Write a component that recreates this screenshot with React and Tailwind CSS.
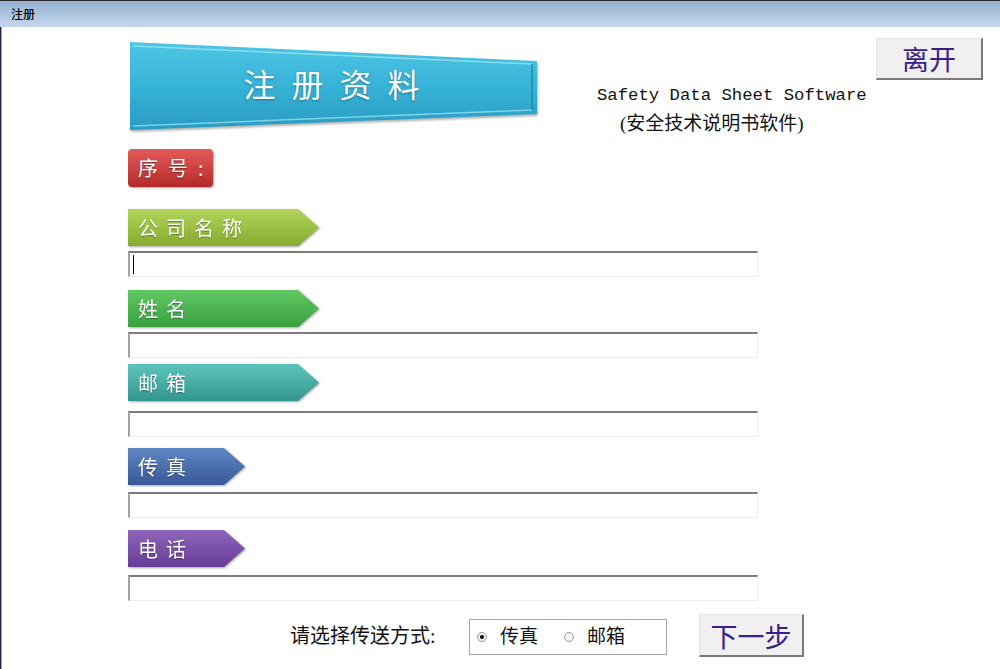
import React from 'react';

const fields = [
  { label: '公司名称', tagMt: 'mt-[22px]', inMt: 'mt-[5px]', wide: true, grad: 'from-[#b2d55a] to-[#85ab2c]', caret: true },
  { label: '姓名', tagMt: 'mt-[13px]', inMt: 'mt-[5px]', wide: true, grad: 'from-[#62c864] to-[#38a03e]' },
  { label: '邮箱', tagMt: 'mt-[6px]', inMt: 'mt-[10px]', wide: true, grad: 'from-[#5cc4bc] to-[#33978f]' },
  { label: '传真', tagMt: 'mt-[11px]', inMt: 'mt-[7px]', wide: false, grad: 'from-[#5f86c4] to-[#3a5996]' },
  { label: '电话', tagMt: 'mt-[12px]', inMt: 'mt-[8px]', wide: false, grad: 'from-[#9066bd] to-[#673b94]' },
];

const Banner = () => (
  <div className="relative ml-[2px] mt-[15px] w-[407px] h-[88px] flex items-center justify-center">
    {/* wordart style background */}
    <svg className="absolute inset-0 drop-shadow-[1px_2px_1px_rgba(0,0,0,0.3)]" width="407" height="88" viewBox="0 0 407 88">
      <defs>
        <linearGradient id="bn" x1="0" y1="0" x2="0" y2="1">
          <stop offset="0" stopColor="#4ec6e4" />
          <stop offset="0.5" stopColor="#37b3d8" />
          <stop offset="1" stopColor="#2a9bc2" />
        </linearGradient>
      </defs>
      <polygon points="0,0 407,19 407,72 0,88" fill="url(#bn)" />
      <polyline points="3,4 402,22" stroke="#9ae6f6" strokeWidth="1.5" fill="none" opacity="0.8" />
      <polyline points="3,84 402,68" stroke="#8fe0f2" strokeWidth="1.5" fill="none" opacity="0.8" />
      <polyline points="402,22 402,68" stroke="#2288ad" strokeWidth="1.5" fill="none" />
    </svg>
    <span className="relative mb-[6px] text-white text-[32px] leading-none tracking-[16px] pl-[12px] [text-shadow:0_1px_2px_rgba(0,60,90,0.5)] [font-family:'Noto_Sans_CJK_SC',sans-serif]">
      注册资料
    </span>
  </div>
);

const Tag = ({ label, wide, grad, mt }) => (
  <div className={`${mt} drop-shadow-[1px_1px_1px_rgba(0,0,0,0.35)]`}>
    <div
      className={`h-[37px] ${wide ? 'w-[191px]' : 'w-[117px]'} bg-linear-to-b ${grad} flex items-center pl-[10px] text-white text-[20px] tracking-[8px] whitespace-nowrap [text-shadow:0_1px_1px_rgba(0,0,0,0.35)] [clip-path:polygon(0_0,calc(100%_-_21px)_0,100%_50%,calc(100%_-_21px)_100%,0_100%)] [font-family:'Noto_Sans_CJK_SC',sans-serif]`}
    >
      {label}
    </div>
  </div>
);

const Field = ({ caret, mt }) => (
  <div className={`${mt} w-[630px] h-[26px] bg-white border-t-2 border-l-2 border-r border-b border-t-[#7c7c7c] border-l-[#a4a4a4] border-r-[#ececec] border-b-[#ececec] flex items-center`}>
    {caret && <span className="ml-[3px] w-px h-[19px] bg-black" />}
  </div>
);

const Radio = ({ checked }) => (
  <span className="w-[10px] h-[10px] rounded-full border border-[#9a9a9a] bg-[#f4f4f4] flex items-center justify-center">
    {checked && <span className="w-[4px] h-[4px] rounded-full bg-black" />}
  </span>
);

const WinButton = ({ children, className }) => (
  <button
    className={`${className} bg-[#f0f0f0] border-t border-l border-t-[#e4e4e4] border-l-[#e4e4e4] border-r-2 border-b-2 border-r-[#7a7a7a] border-b-[#7a7a7a] flex items-center justify-center text-[27px] leading-none text-[#38208c] [font-family:'Noto_Sans_CJK_SC',sans-serif]`}
  >
    {children}
  </button>
);

export default function App() {
  return (
    <div className="w-[1000px] h-[669px] flex flex-col bg-white overflow-hidden text-[#111] [font-family:'Liberation_Serif','Noto_Sans_CJK_SC',serif]">
      {/* title bar */}
      <div className="h-[27px] shrink-0 border-t border-[#2a2a2a] bg-linear-to-b from-[#97b1d2] to-[#c5d7ec] flex items-center pl-[11px] text-[12px] font-medium text-black [font-family:'Noto_Sans_CJK_SC',sans-serif]">
        注册
      </div>

      <div className="flex-1 border-l border-[#1d2b45]">
        <div className="h-full border-l border-[#7aa2da] pl-[126px]">
          <div className="h-[103px] flex items-start">
            <Banner />
            <div className="ml-[60px] mt-[58px] w-[279px]">
              <div className="text-[17.3px] leading-[22px] whitespace-nowrap [font-family:'Liberation_Mono',monospace]">
                Safety Data Sheet Software
              </div>
              <div className="mt-[5px] ml-[23px] text-[19px] leading-[24px] whitespace-nowrap">(安全技术说明书软件)</div>
            </div>
            <WinButton className="mt-[11px] w-[107px] h-[42px]">离开</WinButton>
          </div>

          {/* serial number */}
          <div className="mt-[19px] w-[85px] h-[38px] rounded-[4px] bg-linear-to-b from-[#e45a5a] to-[#b42a2a] shadow-[1px_1px_2px_rgba(0,0,0,0.35)] flex items-center pl-[10px] text-white text-[20px] tracking-[10px] whitespace-nowrap [text-shadow:0_1px_1px_rgba(0,0,0,0.35)] [font-family:'Noto_Sans_CJK_SC',sans-serif]">
            序号<span className="tracking-normal">:</span>
          </div>

          {fields.map((f) => (
            <div key={f.label}>
              <Tag label={f.label} wide={f.wide} grad={f.grad} mt={f.tagMt} />
              <Field caret={f.caret} mt={f.inMt} />
            </div>
          ))}

          {/* send method */}
          <div className="mt-[13px] ml-[162px] h-[43px] flex items-center">
            <span className="w-[179px] text-[20px] whitespace-nowrap">请选择传送方式:</span>
            <div className="w-[198px] h-[36px] mt-[3px] border border-[#a8a8a8] flex items-center pl-[7px] text-[19px]">
              <Radio checked />
              <span className="ml-[13px]">传真</span>
              <span className="ml-[26px]">
                <Radio />
              </span>
              <span className="ml-[13px]">邮箱</span>
            </div>
            <WinButton className="ml-[32px] w-[105px] h-[43px]">下一步</WinButton>
          </div>
        </div>
      </div>
    </div>
  );
}
